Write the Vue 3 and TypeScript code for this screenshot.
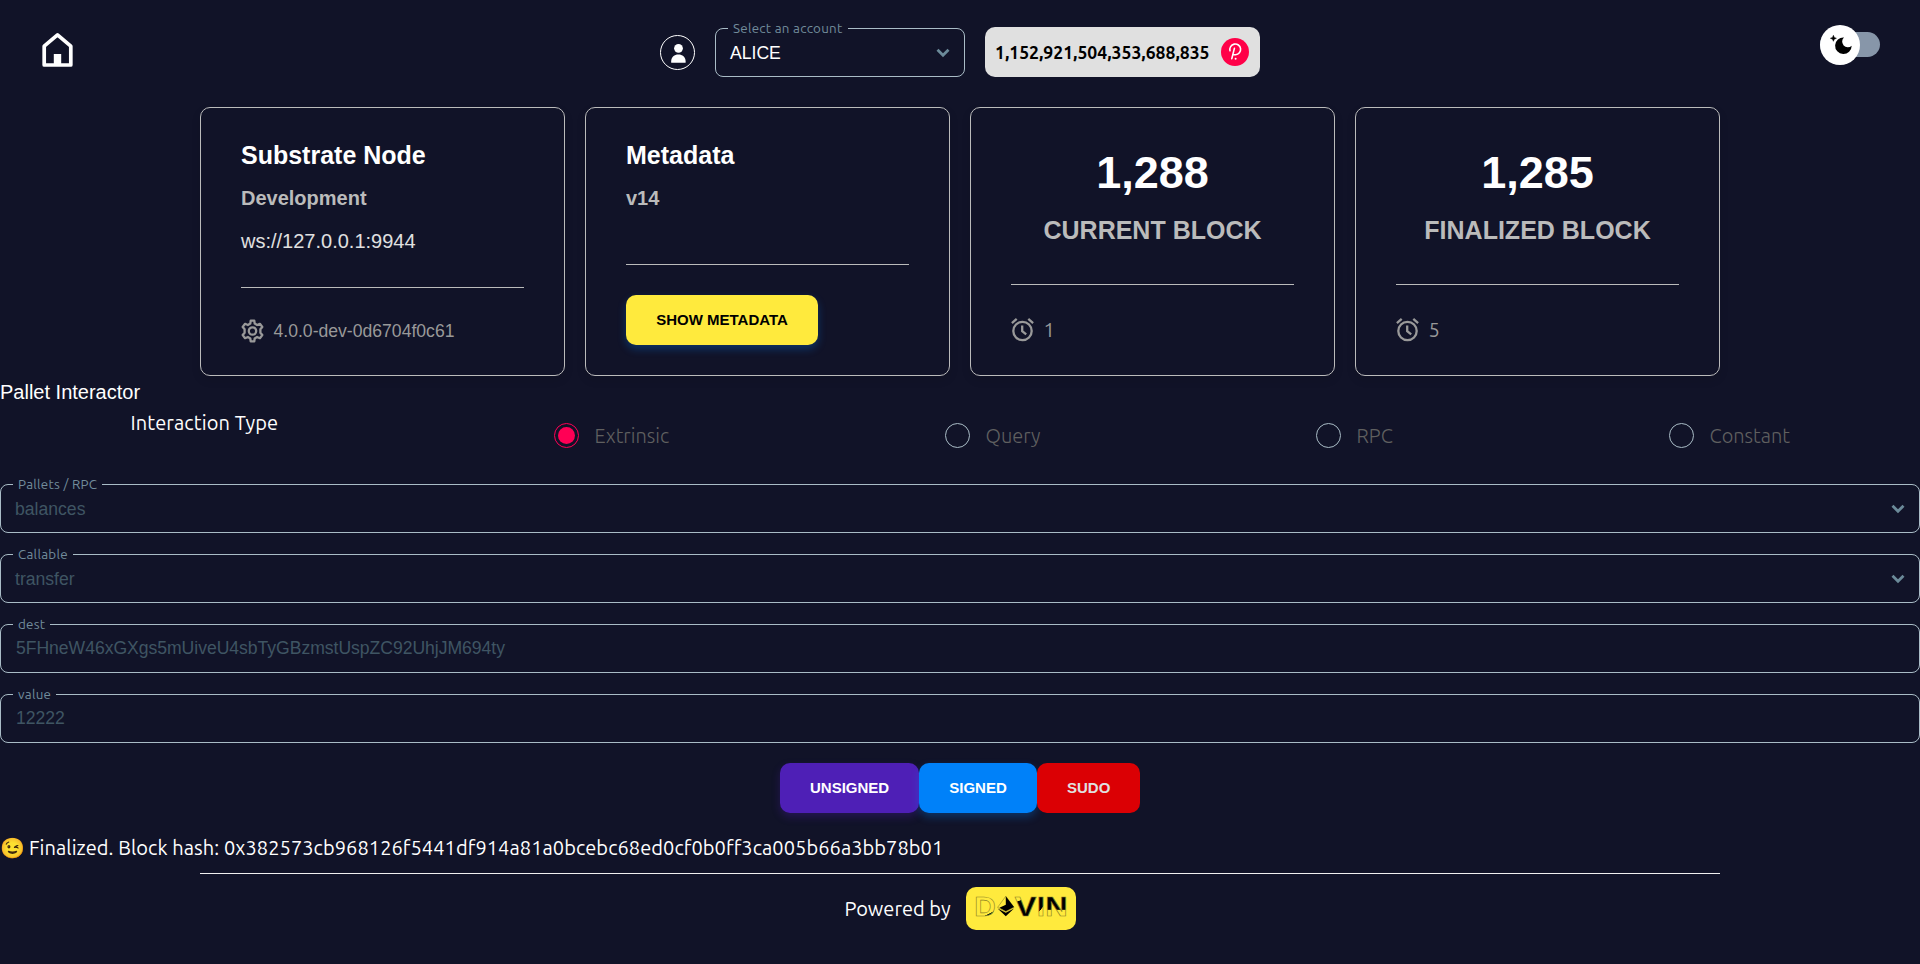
<script setup lang="ts">
import { ref } from 'vue'

interface Field {
  label: string
  value: string
  kind: 'select' | 'input'
}

const account = 'ALICE'
const balance = '1,152,921,504,353,688,835'
const blocks = [
  { number: '1,288', label: 'CURRENT BLOCK', seconds: 1 },
  { number: '1,285', label: 'FINALIZED BLOCK', seconds: 5 },
]
const interactionTypes = ['Extrinsic', 'Query', 'RPC', 'Constant']
const selected = ref('Extrinsic')
const fields: Field[] = [
  { label: 'Pallets / RPC', value: 'balances', kind: 'select' },
  { label: 'Callable', value: 'transfer', kind: 'select' },
  { label: 'dest', value: '5FHneW46xGXgs5mUiveU4sbTyGBzmstUspZC92UhjJM694ty', kind: 'input' },
  { label: 'value', value: '12222', kind: 'input' },
]
const status =
  'Finalized. Block hash: 0x382573cb968126f5441df914a81a0bcebc68ed0cf0b0ff3ca005b66a3bb78b01'
</script>

<template>
  <div class="page">
    <header class="header">
      <a class="home" aria-label="Home">
        <svg width="31" height="35" viewBox="0 0 31 35">
          <path d="M2.2 33V14.2L15.5 2.8l13.3 11.4V33z" fill="none" stroke="#fff" stroke-width="3.7" stroke-linejoin="round" />
          <path d="M11.8 22h7.4v12h-7.4z" fill="#fff" />
        </svg>
      </a>
      <div class="account">
        <svg class="avatar" width="35" height="35" viewBox="0 0 35 35">
          <circle cx="17.5" cy="17.5" r="17" fill="none" stroke="#fff" />
          <circle cx="18.5" cy="13.3" r="4.4" fill="#fff" />
          <path d="M11.2 27.8v-1.6c0-4 3.2-6.6 7.2-6.6s7.2 2.6 7.2 6.6v1.6z" fill="#fff" />
        </svg>
        <fieldset class="field account-field">
          <legend>Select an account</legend>
          <div class="value">
            <span>{{ account }}</span>
            <svg width="14" height="10" viewBox="0 0 14 10"><path d="M1.5 1.8 7 7.2l5.5-5.4" /></svg>
          </div>
        </fieldset>
        <div class="balance">
          <span>{{ balance }}</span>
          <svg width="28" height="28" viewBox="0 0 28 28">
            <circle cx="14" cy="14" r="14" fill="#ff0048" />
            <path
              d="M9 12.8a5.4 5.4 0 1 1 5.6 4h-1.8M13.4 10.4l-2.6 10.2"
              fill="none"
              stroke="#fff"
              stroke-width="1.6"
              stroke-linecap="round"
            />
            <circle cx="14.6" cy="20.8" r="1" fill="#fff" />
          </svg>
        </div>
      </div>
      <div class="theme">
        <div class="knob">
          <svg width="40" height="40" viewBox="0 0 40 40">
            <path d="M24 12.4a8.3 8.3 0 1 0 7.7 8.4 5 5 0 0 1-7.7-8.4z" fill="#000" />
            <path d="M13.4 10.3l.9 2.1 2.1.9-2.1.9-.9 2.1-.9-2.1-2.1-.9 2.1-.9z" fill="#000" stroke="#000" stroke-width=".5" />
          </svg>
        </div>
      </div>
    </header>

    <section class="cards">
      <article class="card">
        <h2>Substrate Node</h2>
        <h3>Development</h3>
        <p class="endpoint">ws://127.0.0.1:9944</p>
        <hr />
        <div class="meta version">
          <svg width="23" height="24" viewBox="0.5 0 23 24" fill="none" stroke="#999" stroke-width="2.3" stroke-linejoin="round">
            <path
              d="M9.8 4.6 10.2 1.6h3.6l.4 3 2.4 1.4 2.8-1.2 2.4 3.1-1.9 2.3v3.6l1.9 2.3-2.4 3.1-2.8-1.2-2.4 1.4-.4 3h-3.6l-.4-3L7.4 18l-2.8 1.2-2.4-3.1 1.9-2.3v-3.6L2.2 7.9l2.4-3.1L7.4 6z"
            />
            <circle cx="12" cy="12" r="3.7" />
          </svg>
          <span>4.0.0-dev-0d6704f0c61</span>
        </div>
      </article>

      <article class="card metadata">
        <h2>Metadata</h2>
        <h3>v14</h3>
        <hr />
        <button class="btn yellow">SHOW METADATA</button>
      </article>

      <article v-for="b in blocks" :key="b.label" class="card block">
        <p class="number">{{ b.number }}</p>
        <p class="caption">{{ b.label }}</p>
        <hr />
        <div class="meta">
          <svg width="23" height="24" viewBox="0.5 0 23 24" fill="none" stroke="#999" stroke-width="2.3">
            <circle cx="12" cy="13" r="9.2" />
            <path d="M11.7 7.6v5.6l4 3.2M1.4 5.1 6.2.9M22.6 5.1 17.8.9" />
          </svg>
          <span>{{ b.seconds }}</span>
        </div>
      </article>
    </section>

    <p class="heading">Pallet Interactor</p>
    <section class="types">
      <span class="types-title">Interaction Type</span>
      <label v-for="t in interactionTypes" :key="t" class="radio" :class="[t.toLowerCase(), { on: t === selected }]" @click="selected = t">
        <i class="dot"></i>
        <span>{{ t }}</span>
      </label>
    </section>

    <section class="fields">
      <fieldset v-for="f in fields" :key="f.label" class="field muted" :class="f.kind">
        <legend>{{ f.label }}</legend>
        <div class="value">
          <span>{{ f.value }}</span>
          <svg v-if="f.kind === 'select'" width="14" height="10" viewBox="0 0 14 10"><path d="M1.5 1.8 7 7.2l5.5-5.4" /></svg>
        </div>
      </fieldset>
    </section>

    <div class="actions">
      <button class="btn purple">UNSIGNED</button>
      <button class="btn blue">SIGNED</button>
      <button class="btn red">SUDO</button>
    </div>

    <p class="status"><span class="emoji">😉</span>{{ status }}</p>

    <footer class="footer">
      <span>Powered by</span>
      <a class="badge" aria-label="Dovin">
        <svg width="110" height="43" viewBox="0 0 110 43">
          <defs>
            <linearGradient id="ink-d" x1="0" y1="0" x2=".35" y2="1">
              <stop offset=".86" stop-color="#ffea3d" />
              <stop offset=".88" stop-color="#111" />
            </linearGradient>
            <linearGradient id="ink-v" x1="0" y1="0" x2=".25" y2="1">
              <stop offset=".34" stop-color="#ffea3d" />
              <stop offset=".36" stop-color="#000" />
            </linearGradient>
            <linearGradient id="ink-i" x1="0" y1="0" x2=".3" y2="1">
              <stop offset=".68" stop-color="#000" />
              <stop offset=".7" stop-color="#ffea3d" />
            </linearGradient>
            <linearGradient id="ink-n" x1="0" y1="0" x2="0" y2="1">
              <stop offset=".6" stop-color="#000" />
              <stop offset=".62" stop-color="#ffea3d" />
            </linearGradient>
          </defs>
          <g class="logo">
            <text x="8.3" y="28.8" textLength="21.5" lengthAdjust="spacingAndGlyphs" fill="url(#ink-d)">D</text>
            <text x="48.8" y="28.8" textLength="21.6" lengthAdjust="spacingAndGlyphs" fill="url(#ink-v)">V</text>
            <text x="70.9" y="28.8" textLength="7.8" lengthAdjust="spacingAndGlyphs" fill="url(#ink-i)">I</text>
            <text x="79.2" y="28.8" textLength="22.4" lengthAdjust="spacingAndGlyphs" fill="url(#ink-n)">N</text>
          </g>
          <path d="M39.8 9.2 31.6 20.4l8.2 4.4 8.2-4.4z" fill="none" stroke="#8f8425" stroke-width=".6" />
          <path d="M39.8 9.2 48 20l-8.2 4.2-6.4-3.4 6.4-3zM31.6 21.4l8.2 4.4 8.2-4.4-8.2 7.8z" fill="#000" />
        </svg>
      </a>
    </footer>
  </div>
</template>

<style>
body {
  background: #111328;
}
</style>

<style scoped>
.page {
  --sans: 'Liberation Sans', Arial, sans-serif;
  --ui: 'Ubuntu', 'Noto Sans', sans-serif;
  height: 964px;
  overflow: hidden;
  background: #111328;
  color: #fff;
  font: 20px/24px var(--ui);
}
p,
h2,
h3 {
  margin: 0;
}
.header {
  box-sizing: border-box;
  height: 107px;
  padding: 21px 40px 0;
  display: flex;
  justify-content: space-between;
  align-items: flex-start;
}
.home {
  box-sizing: border-box;
  width: 60px;
  padding: 11px 0 0 2px;
}
.home svg,
.avatar {
  display: block;
}
.account {
  display: flex;
  align-items: flex-start;
  gap: 20px;
}
.avatar {
  margin-top: 14px;
}
.field {
  box-sizing: border-box;
  height: 56px;
  min-width: 0;
  margin: 0;
  padding: 0 14px 0 12px;
  border: 1px solid #a9bcc6;
  border-radius: 8px;
}
.field legend {
  padding: 1px 5px;
  font-size: 13.4px;
  line-height: 13px;
  letter-spacing: 0.26px;
  color: #728c9b;
}
.account-field {
  width: 250px;
}
.value {
  margin: 5px 0 0 2px;
  display: flex;
  justify-content: space-between;
  align-items: center;
  font: 17.6px/24px var(--sans);
}
.value svg path {
  fill: none;
  stroke: #6b8a99;
  stroke-width: 2.8;
}
.muted .value {
  color: #3f5563;
}
.input .value {
  margin: 4px 0 0 3px;
  letter-spacing: -0.04px;
}
.balance {
  box-sizing: border-box;
  width: 275px;
  height: 50px;
  margin-top: 6px;
  padding: 0 11px 0 10px;
  border-radius: 10px;
  background: #e0e0e0;
  color: #000;
  display: flex;
  align-items: center;
  justify-content: space-between;
  font-weight: 700;
  font-size: 17.6px;
}
.balance span {
  padding-top: 2px;
}
.theme {
  width: 60px;
  height: 25px;
  margin-top: 11px;
  border-radius: 13px;
  background: #8796a9;
  display: flex;
  align-items: center;
}
.knob {
  flex: none;
  width: 40px;
  height: 40px;
  border-radius: 50%;
  background: #fff;
}
.cards {
  width: 1520px;
  margin: 0 auto;
  display: grid;
  grid-template-columns: repeat(4, 1fr);
  gap: 20px;
}
.card {
  box-sizing: border-box;
  height: 269px;
  padding: 32px 40px 0;
  border: 1px solid #bbb;
  border-radius: 10px;
  font-family: var(--sans);
  box-shadow: 0 4px 10px rgba(0, 0, 0, 0.1);
}
.card h2 {
  font-size: 25px;
  line-height: 30px;
}
.card h3 {
  margin-top: 16px;
  font-size: 20px;
  line-height: 24px;
  color: #bbb;
}
.card hr {
  height: 1px;
  margin: 0;
  border: 0;
  background: #bbb;
}
.endpoint {
  margin-top: 19px;
  font-size: 20px;
  color: #e0e0e0;
}
.endpoint + hr {
  margin-top: 34px;
}
.meta {
  margin-top: 33px;
  display: flex;
  align-items: center;
  gap: 9.5px;
  color: #999;
  font: 20px/24px var(--ui);
}
.meta.version {
  margin-top: 31px;
  font: 17.6px/24px var(--sans);
}
.metadata hr {
  margin: 54px 0 30px;
}
.block .number {
  margin-top: 8px;
  text-align: center;
  font-weight: 700;
  font-size: 45px;
  line-height: 50px;
}
.block .caption {
  margin: 17px 0 39px;
  text-align: center;
  font-weight: 700;
  font-size: 25px;
  line-height: 30px;
  color: #bbb;
}
.btn {
  height: 50px;
  padding: 0 30px 2px;
  border: 0;
  border-radius: 10px;
  color: #fff;
  font: 700 15px var(--sans);
}
.yellow {
  width: 192px;
  background: #ffea3d;
  color: #000;
  box-shadow: 0 4px 9px rgba(0, 129, 249, 0.3);
}
.purple {
  width: 139px;
  background: #4e1fb6;
  box-shadow: 0 4px 9px rgba(78, 31, 182, 0.3);
}
.blue {
  width: 118px;
  background: #0081f9;
  box-shadow: 0 4px 9px rgba(0, 129, 249, 0.3);
}
.red {
  width: 103px;
  background: #db0004;
  color: #e0e0e0;
}
.heading {
  padding-top: 4px;
  font: 20px/24px var(--sans);
}
.types {
  height: 73px;
  box-sizing: border-box;
  padding-top: 7px;
  display: flex;
  justify-content: center;
  align-items: flex-start;
  gap: 275px;
}
.types-title {
  width: 148px;
  white-space: nowrap;
  letter-spacing: 0.1px;
}
.radio {
  padding-top: 12px;
  display: flex;
  align-items: center;
  gap: 16px;
  font-weight: 300;
  color: #606060;
}
.extrinsic {
  width: 116px;
}
.query {
  width: 96px;
}
.rpc {
  width: 78px;
}
.constant {
  width: 121px;
}
.dot {
  box-sizing: border-box;
  flex: none;
  width: 25px;
  height: 25px;
  padding: 3px;
  border: 1px solid #a9bcc6;
  border-radius: 50%;
}
.on .dot {
  border-color: #ff0055;
  background: #ff0055 content-box;
}
.fields {
  display: grid;
  gap: 14px;
}
.actions {
  margin-top: 20px;
  display: flex;
  justify-content: center;
}
.status {
  margin-top: 23px;
  white-space: nowrap;
  letter-spacing: 0.07px;
}
.emoji {
  display: inline-block;
  width: 29px;
}
.footer {
  width: 1520px;
  margin: 13px auto 0;
  padding-top: 13px;
  border-top: 1px solid #f0f0f0;
  display: flex;
  justify-content: center;
  align-items: center;
  gap: 15px;
}
.badge {
  width: 110px;
  height: 43px;
  border-radius: 10px;
  background: #ffea3d;
}
.badge svg {
  display: block;
}
.logo text {
  font: 700 28px var(--sans);
  stroke: #8f8425;
  stroke-width: 0.6;
}
</style>
